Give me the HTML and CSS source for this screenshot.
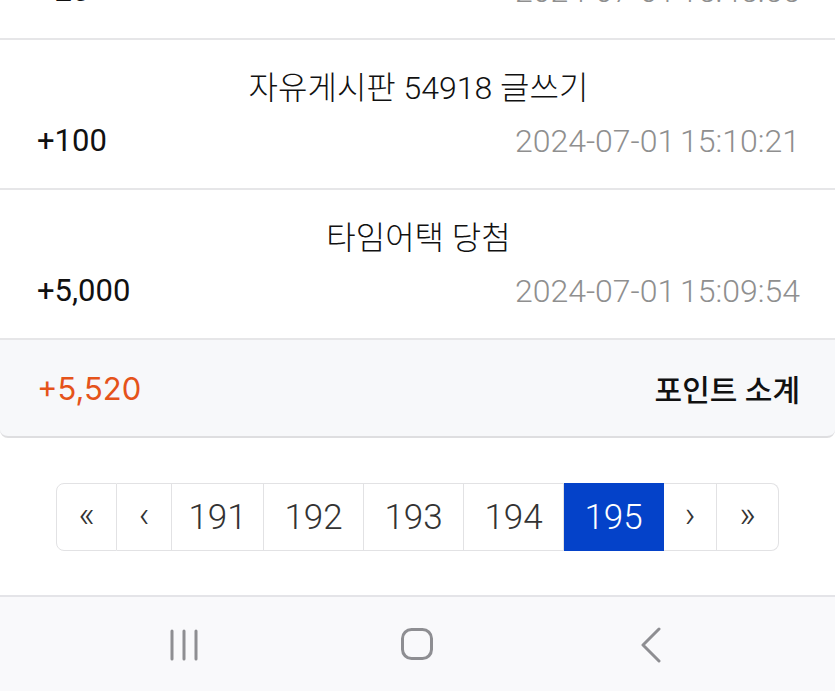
FILE: index.html
```html
<!DOCTYPE html>
<html lang="ko">
<head>
    <meta charset="UTF-8">
    <meta name="viewport" content="width=device-width, initial-scale=1.0">
    <title>포인트 내역</title>
    <link rel="stylesheet" href="styles.css">
</head>
<body>

<div class="point-list">
    <div class="point-row">
        <div class="point-title">출석 체크</div>
        <div class="point-meta">
            <span class="point-amount">+20</span>
            <span class="point-date">2024-07-01 15:45:55</span>
        </div>
    </div>
    <div class="point-row">
        <div class="point-title">자유게시판 54918 글쓰기</div>
        <div class="point-meta">
            <span class="point-amount">+100</span>
            <span class="point-date">2024-07-01 15:10:21</span>
        </div>
    </div>
    <div class="point-row">
        <div class="point-title">타임어택 당첨</div>
        <div class="point-meta">
            <span class="point-amount">+5,000</span>
            <span class="point-date">2024-07-01 15:09:54</span>
        </div>
    </div>
    <div class="point-total">
        <span class="total-amount">+5,520</span>
        <span class="total-label">포인트 소계</span>
    </div>
</div>

<div class="pager">
    <a class="page-link page-arrow w-first">&laquo;</a>
    <a class="page-link page-arrow w-prev">&lsaquo;</a>
    <a class="page-link w-191">191</a>
    <a class="page-link w-num">192</a>
    <a class="page-link w-num">193</a>
    <a class="page-link w-num">194</a>
    <a class="page-link w-num active">195</a>
    <a class="page-link page-arrow w-next">&rsaquo;</a>
    <a class="page-link page-arrow w-last">&raquo;</a>
</div>

<nav class="nav-bar">
    <div class="nav-btn">
        <svg width="34" height="34" viewBox="0 0 34 34" fill="none" stroke="#8e8e92" stroke-width="3" stroke-linecap="round">
            <path d="M4 3v28M16 3v28M28 3v28"/>
        </svg>
    </div>
    <div class="nav-btn">
        <svg width="36" height="36" viewBox="0 0 36 36" fill="none" stroke="#8e8e92" stroke-width="3">
            <rect x="2.5" y="2.5" width="29" height="29" rx="9"/>
        </svg>
    </div>
    <div class="nav-btn">
        <svg width="24" height="36" viewBox="0 0 24 36" fill="none" stroke="#8e8e92" stroke-width="3" stroke-linecap="round" stroke-linejoin="round">
            <path d="M20 2L4 18l16 16"/>
        </svg>
    </div>
</nav>

</body>
</html>
```

FILE: styles.css
```css
body {
    margin: 0;
    padding: 0;
    background-color: #fff;
    font-family: Roboto, "Noto Sans CJK KR", sans-serif;
    color: #222;
    overflow: hidden;
}

.point-list {
    margin-top: -110px; /* first row is scrolled off the top */
}

.point-row {
    box-sizing: border-box;
    height: 150px;
    padding: 28px 35px 0 37px;
    border-bottom: 2px solid #e6e6e8;
}

.point-title {
    text-align: center;
    font-size: 32px;
    font-weight: 300;
    line-height: 40px;
    color: #111;
}

.point-meta {
    display: flex;
    justify-content: space-between;
    align-items: center;
    margin-top: 13px;
    line-height: 40px;
}

.point-amount {
    font-size: 31px;
    color: #111;
}

.point-date {
    font-size: 32px;
    font-weight: 300;
    color: #8f8f8f;
    word-spacing: -3px;
}

.point-total {
    box-sizing: border-box;
    height: 98px;
    display: flex;
    justify-content: space-between;
    align-items: center;
    padding: 0 35px 0 37px;
    background-color: #f7f8fa;
    border-bottom: 2px solid #dedee0;
    border-radius: 0 0 8px 8px;
}

.total-amount {
    font-family: Inter, "Noto Sans", sans-serif;
    font-size: 31px;
    color: #e5531a;
}

.total-label {
    font-size: 30px;
    font-weight: 500;
    color: #111;
}

.pager {
    display: flex;
    justify-content: center;
    margin-top: 45px;
}

.page-link {
    box-sizing: border-box;
    height: 68px;
    display: flex;
    justify-content: center;
    align-items: center;
    font-size: 35px;
    font-weight: 300;
    color: #333;
    border: 1.5px solid #e2e2e4;
    border-left: none;
    background-color: #fff;
}

.page-arrow {
    font-size: 36px;
    font-weight: 300;
    color: #333;
    padding-bottom: 4px;
}

.w-first {
    width: 61px;
    border-left: 1.5px solid #e2e2e4;
    border-radius: 8px 0 0 8px;
}

.w-prev { width: 55px; }
.w-191 { width: 92px; }
.w-num { width: 100px; }
.w-next { width: 53px; }

.w-last {
    width: 62px;
    border-radius: 0 8px 8px 0;
}

.page-link.active {
    background-color: #0442c9;
    border-color: #0442c9;
    color: #fff;
}

.nav-bar {
    display: flex;
    justify-content: center;
    height: 96px;
    margin-top: 44px;
    background-color: #f9f9fb;
    border-top: 2px solid #e4e4e8;
}

.nav-btn {
    width: 233px;
    display: flex;
    justify-content: center;
    align-items: center;
}
```
